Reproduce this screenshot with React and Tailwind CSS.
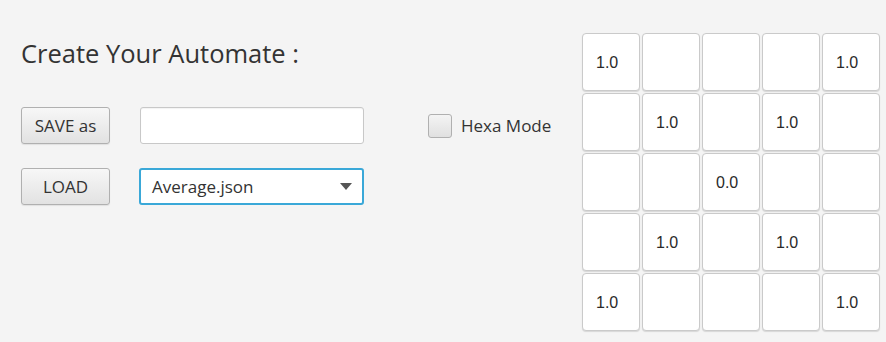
import React from "react";

const grid = [
  ["1.0", "", "", "", "1.0"],
  ["", "1.0", "", "1.0", ""],
  ["", "", "0.0", "", ""],
  ["", "1.0", "", "1.0", ""],
  ["1.0", "", "", "", "1.0"],
];

const font = { fontFamily: '"Open Sans", "Noto Sans", sans-serif' };

const Button = ({ children }) => (
  <button className="w-[89px] h-[37px] rounded-[3px] border border-[#b0b0b0] bg-gradient-to-b from-[#f7f7f7] to-[#e2e2e2] text-[17px] text-[#333] shadow-[0_1px_1px_rgba(0,0,0,0.08)]">
    {children}
  </button>
);

export default function App() {
  return (
    <div
      className="w-[886px] h-[342px] bg-[#f4f4f4] flex text-[#333]"
      style={font}
    >
      {/* left form */}
      <div className="pl-[21px] pt-[36px] w-[364px] shrink-0">
        <h1 className="text-[25.5px] leading-[34px] font-normal text-[#333]">
          Create Your Automate :
        </h1>
        <div className="mt-[37px] flex gap-[30px]">
          <Button>SAVE as</Button>
          <input
            className="w-[224px] h-[37px] rounded-[3px] border border-[#c8c8c8] bg-white outline-none shadow-[inset_0_1px_1px_rgba(0,0,0,0.05)]"
            defaultValue=""
          />
        </div>
        <div className="mt-[24px] flex gap-[29px]">
          <Button>LOAD</Button>
          <div className="w-[225px] h-[37px] rounded-[3px] border-2 border-[#3aa8d8] bg-white flex items-center justify-between pl-[11px] pr-[10px]">
            <span className="text-[17px] text-[#333]">Average.json</span>
            <svg width="12" height="7" viewBox="0 0 12 7">
              <path d="M0 0h12L6 7z" fill="#555" />
            </svg>
          </div>
        </div>
      </div>

      {/* hexa mode */}
      <div className="ml-[64px] w-[154px] pt-[113px] shrink-0">
        <label className="flex items-center gap-[9px]">
          <span className="w-[24px] h-[24px] rounded-[3px] border border-[#b0b0b0] bg-gradient-to-b from-[#f4f4f4] to-[#e0e0e0]" />
          <span className="text-[17px] text-[#333]">Hexa Mode</span>
        </label>
      </div>

      {/* matrix */}
      <div className="pt-[33px]">
        <div className="grid grid-cols-[repeat(5,58px)] gap-[2px]">
          {grid.flat().map((v, i) => (
            <div
              key={i}
              className="h-[58px] rounded-[4px] border border-[#cacaca] bg-white flex items-center pl-[13px] pt-[1px] text-[16px] text-[#2a2a2a] shadow-[0_1px_1px_rgba(0,0,0,0.12)]"
              style={{ fontFamily: '"Liberation Sans", Arial, sans-serif' }}
            >
              {v}
            </div>
          ))}
        </div>
      </div>
    </div>
  );
}
